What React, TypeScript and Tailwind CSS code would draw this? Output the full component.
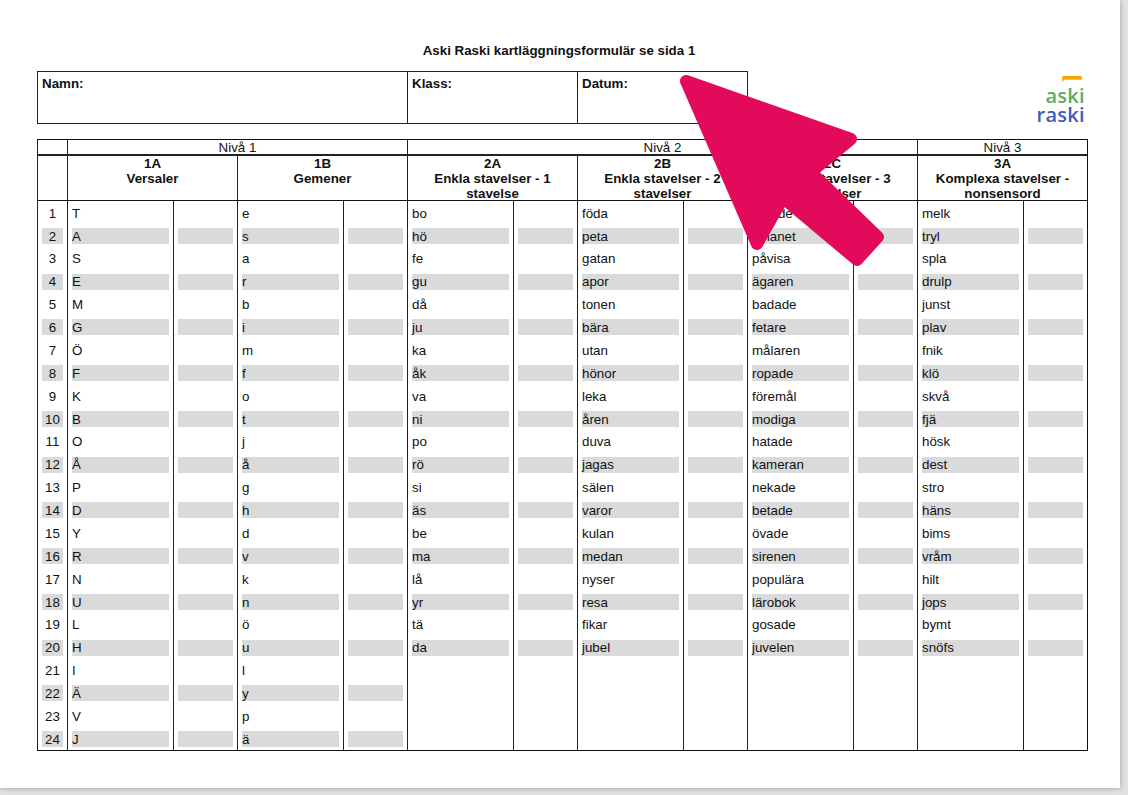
const rows: string[][] = [
  "T A S E M G Ö F K B O Å P D Y R N U L H I Ä V J".split(" "),
  "e s a r b i m f o t j å g h d v k n ö u l y p ä".split(" "),
  "bo hö fe gu då ju ka åk va ni po rö si äs be ma lå yr tä da".split(" "),
  "föda peta gatan apor tonen bära utan hönor leka åren duva jagas sälen varor kulan medan nyser resa fikar jubel".split(" "),
  "hämde smanet påvisa ägaren badade fetare målaren ropade föremål modiga hatade kameran nekade betade övade sirenen populära lärobok gosade juvelen".split(" "),
  "melk tryl spla drulp junst plav fnik klö skvå fjä hösk dest stro häns bims vråm hilt jops bymt snöfs".split(" "),
];

const heads = [
  ["1A", "Versaler"],
  ["1B", "Gemener"],
  ["2A", "Enkla stavelser - 1", "stavelse"],
  ["2B", "Enkla stavelser - 2", "stavelser"],
  ["2C", "Enkla stavelser - 3", "stavelser"],
  ["3A", "Komplexa stavelser -", "nonsensord"],
];

const rowNumbers = Array.from({ length: 24 }, (_, i) => i);

function Bar({ on, center, children }: { on: boolean; center?: boolean; children?: React.ReactNode }) {
  return (
    <div className={`flow-root h-4 ${on ? "bg-[#dadada]" : ""} ${center ? "text-center" : ""}`}>
      {/* small nudge so the text snaps to the same pixel rows as the pdf */}
      <div className="-mt-[0.3px] leading-[17px]">{children}</div>
    </div>
  );
}

function Logo() {
  return (
    <div className="mr-[3px] flex w-[50px] flex-col items-end pt-[5px] font-['Open_Sans',sans-serif] text-[20px] leading-[19px] font-semibold tracking-[0.3px]">
      <svg width="26" height="8" viewBox="0 0 26 8" className="mb-[4px]">
        <path d="M0 0H26V5H3L0 8Z" fill="#f7a600" />
      </svg>
      <span className="text-[#5bab62]">aski</span>
      <span className="text-[#3f5cb8]">raski</span>
    </div>
  );
}

function Arrow() {
  return (
    <svg width="230" height="220" viewBox="670 65 230 220" className="absolute top-[65px] left-[670px]">
      <path
        d="M686 81L851 139L811 172L878 237L857 260L783 198L757 244Z"
        fill="#e30a5c"
        stroke="#e30a5c"
        strokeWidth="12"
        strokeLinejoin="round"
      />
    </svg>
  );
}

export default function App() {
  return (
    <div className="relative h-[795px] w-[1128px] overflow-hidden bg-[#e2e2e2] font-['Liberation_Sans',Arial,sans-serif] text-[13.33px] text-[#111]">
      <div className="flex h-[788px] w-[1120px] flex-col bg-white pt-[43px] pl-[37px] shadow-[0_0_6px_rgba(0,0,0,0.3)]">
        <h1 className="h-[28px] w-[1044px] text-center text-[13.33px] leading-[15px] font-bold">
          Aski Raski kartläggningsformulär se sida 1
        </h1>

        <div className="flex h-[53px] w-[1051px] justify-between">
          <div className="grid h-[53px] w-[711px] grid-cols-[370px_170px_171px] border-t border-b border-[#222] font-bold">
            <div className="border-l border-[#222] px-1 pt-1 leading-[15px]">Namn:</div>
            <div className="border-l border-[#222] px-1 pt-1 leading-[15px]">Klass:</div>
            <div className="border-x border-[#222] px-1 pt-1 leading-[15px]">Datum:</div>
          </div>
          <Logo />
        </div>

        <div className="mt-[15px] w-[1051px] border-t border-r border-b border-[#111]">
          <div className="grid h-[16px] grid-cols-[30px_340px_510px_170px] border-b-2 border-[#222] text-center leading-[15px]">
            <div className="border-l border-[#222]" />
            <div className="border-l border-[#222]">Nivå 1</div>
            <div className="border-l border-[#222]">Nivå 2</div>
            <div className="border-l border-[#222]">Nivå 3</div>
          </div>

          <div className="grid h-[45px] grid-cols-[30px_repeat(6,170px)] border-b border-[#111] text-center leading-[15px] font-bold">
            <div className="border-l border-[#222]" />
            {heads.map((h) => (
              <div key={h[0]} className="border-l border-[#222]">
                {h.map((line) => (
                  <div key={line}>{line}</div>
                ))}
              </div>
            ))}
          </div>

          <div className="grid h-[549px] grid-cols-[30px_repeat(6,106px_64px)] grid-rows-[repeat(24,1fr)]">
            {rowNumbers.map((i) => {
              const even = i % 2 === 1;
              return [
                <div key={`n${i}`} className="border-l border-[#222] px-1 pt-1">
                  <Bar on={even} center>
                    {i + 1}
                  </Bar>
                </div>,
                ...rows.flatMap((col, c) => {
                  const word = col[i];
                  const shaded = even && word !== undefined;
                  return [
                    <div key={`w${c}-${i}`} className="border-l border-[#222] px-1 pt-1">
                      <Bar on={shaded}>{word}</Bar>
                    </div>,
                    <div key={`b${c}-${i}`} className="border-l border-[#222] px-1 pt-1">
                      <Bar on={shaded} />
                    </div>,
                  ];
                }),
              ];
            })}
          </div>
        </div>
      </div>
      <Arrow />
    </div>
  );
}
